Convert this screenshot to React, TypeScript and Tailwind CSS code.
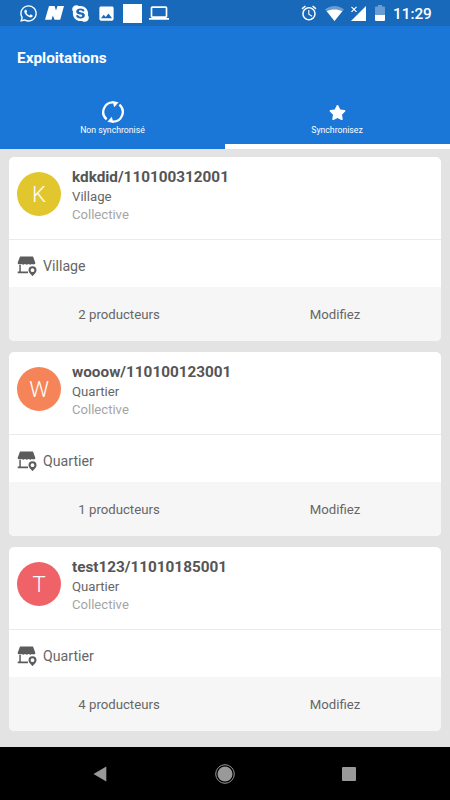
import { useState } from "react";
import { MdAccessAlarm, MdImage, MdLaptop } from "react-icons/md";
import { FaSkype, FaStar, FaWhatsapp } from "react-icons/fa";

const farms = [
  { letter: "K", color: "bg-[#e2c62e]", title: "kdkdid/110100312001", place: "Village", type: "Collective", count: 2 },
  { letter: "W", color: "bg-[#f58559]", title: "wooow/110100123001", place: "Quartier", type: "Collective", count: 1 },
  { letter: "T", color: "bg-[#ef6267]", title: "test123/11010185001", place: "Quartier", type: "Collective", count: 4 },
];

function StatusBar() {
  return (
    <div className="flex h-[26px] shrink-0 items-center justify-between bg-[#1869ba] pl-[19px] pr-[18px] text-white">
      <div className="flex items-center">
        <FaWhatsapp size={19} />
        <svg className="ml-[7px]" width="19" height="14" viewBox="0 0 19 14" fill="currentColor">
          <path d="M4 0h5.600l1.400 4.600L12.500 0H19l-3.800 13.800H9.600L7.800 9.400 6.500 13.800H0z" />
        </svg>
        <FaSkype className="ml-[7px]" size={19} />
        <MdImage className="ml-[7px]" size={19} />
        <div className="ml-[7px] size-[19px] bg-white" />
        <MdLaptop className="ml-[7px]" size={20} />
      </div>
      <div className="flex items-center">
        <MdAccessAlarm size={18} />
        <svg className="ml-[7px]" width="19" height="15" viewBox="0 0 19 15">
          <path d="M0 3.600C5.400-1.200 13.600-1.200 19 3.600L9.500 15z" fill="#fff" opacity="0.35" />
          <path d="M1.800 5.200c4.600-2.400 10.800-2.400 15.400 0L9.500 15z" fill="#fff" />
        </svg>
        <svg className="ml-[7px]" width="15" height="15" viewBox="0 0 15 15">
          <path d="M15 0v15H0z" fill="#fff" />
          <path d="M0 0h6.500v7.500H0z" fill="#1869ba" />
          <path d="M.5.800l5 5M5.500.800l-5 5" stroke="#fff" strokeWidth="1.200" />
        </svg>
        <svg className="ml-[9px]" width="10" height="16" viewBox="0 0 10 16">
          <path d="M3 0h4v1.500h2q1 0 1 1V10H0V2.500q0-1 1-1h2z" fill="#fff" opacity="0.35" />
          <path d="M0 10h10v5q0 1-1 1H1q-1 0-1-1z" fill="#fff" />
        </svg>
        <span className="ml-[8px] w-[39px] whitespace-nowrap pt-px text-[15.300px] font-medium leading-5">11:29</span>
      </div>
    </div>
  );
}

function SyncIcon() {
  return (
    <svg width="24" height="24" viewBox="0 0 24 24" fill="none" stroke="currentColor" strokeWidth="2.300">
      <path d="M5.600 19.300A9.700 9.700 0 0 1 12.500 2.300" />
      <path d="M18.400 4.700A9.700 9.700 0 0 1 11.500 21.700" />
      <path d="M11.500 1.100 17.600 2.200 13.200 7.200z" fill="currentColor" stroke="none" />
      <path d="M12.500 22.900 6.400 21.800 10.800 16.800z" fill="currentColor" stroke="none" />
    </svg>
  );
}

function StoreIcon() {
  return (
    <svg className="mb-px" width="20" height="20" viewBox="0 0 20 20" fill="#5c5c5c">
      <path d="M3 0.500h13l2.300 6.200q.2 1.500-1.300 1.500l-1 .4-1-.6-1.700.8-1.700-.8-1.800.8-1.800-.8-1.800.8-1.800-.8-1.300.6-1-.4Q.5 8.200.7 6.700z" />
      <path d="M2.300 9h1.500v6.400H11v1.900H.7v-1.900h1.600z" />
      <path d="M15.500 10.200a4 4 0 0 0-4 4c0 2.500 4 5.800 4 5.800s4-3.300 4-5.800a4 4 0 0 0-4-4zm0 2.100a1.900 1.900 0 1 1 0 3.800 1.900 1.900 0 0 1 0-3.800z" fillRule="evenodd" />
    </svg>
  );
}

function FarmCard({ farm }: { farm: (typeof farms)[number] }) {
  return (
    <div className="h-[184px] overflow-hidden rounded-[5px] bg-white">
      <div className="flex h-[83px] gap-[11px] border-b border-[#ebebeb] pl-2 pt-[10px]">
        <div className={`mt-[5px] flex size-11 shrink-0 items-center justify-center rounded-full text-[22px] font-light text-white ${farm.color}`}>
          {farm.letter}
        </div>
        <div>
          <h2 className="text-[15.300px] font-bold leading-[21px] text-[#555]">{farm.title}</h2>
          <p className="text-[13.200px] leading-[18px] text-[#666]">{farm.place}</p>
          <p className="text-[13.100px] leading-[18px] text-[#a5a5a5]">{farm.type}</p>
        </div>
      </div>
      <div className="flex h-[47px] items-center gap-[6px] pl-2 pt-[6px]">
        <StoreIcon />
        <span className="pt-px text-[14.200px] text-[#666]">{farm.place}</span>
      </div>
      <div className="grid h-[54px] grid-cols-2 items-center bg-[#f6f6f6] pt-px text-center text-[13.200px] text-[#666]">
        <button className="pl-1">{farm.count} producteurs</button>
        <button className="pl-1">Modifiez</button>
      </div>
    </div>
  );
}

export default function App() {
  const [tab, setTab] = useState(1);

  return (
    <div className="flex h-[800px] w-[450px] flex-col overflow-hidden bg-[#e3e3e3] font-['Roboto',sans-serif]">
      <StatusBar />
      <header className="flex h-[123px] shrink-0 flex-col bg-[#1a77d8] text-white">
        <h1 className="h-[63px] pl-[17px] pt-[20px] text-[15.350px] font-bold leading-6">Exploitations</h1>
        <nav className="grid flex-1 grid-cols-2 text-[8.700px] leading-3">
          <button
            className={`flex flex-col items-center border-b-[5px] pt-[11px] ${tab === 0 ? "border-white" : "border-transparent"}`}
            onClick={() => setTab(0)}
          >
            <SyncIcon />
            <span>Non synchronisé</span>
          </button>
          <button
            className={`flex flex-col items-center border-b-[5px] pr-px pt-[11px] ${tab === 1 ? "border-white" : "border-transparent"}`}
            onClick={() => setTab(1)}
          >
            <span className="flex h-6 items-center">
              <FaStar size={17} />
            </span>
            <span>Synchronisez</span>
          </button>
        </nav>
      </header>

      <main className="flex flex-1 flex-col gap-[11px] px-[9px] pt-2">
        {farms.map((farm) => (
          <FarmCard key={farm.title} farm={farm} />
        ))}
      </main>

      {/* Android navigation */}
      <div className="flex h-[53px] shrink-0 items-center justify-between bg-black pl-[93px] pr-[94px] text-[#999]">
        <svg width="14" height="16" viewBox="0 0 14 16" fill="currentColor">
          <path d="M13.300.500v15L.5 8z" />
        </svg>
        <svg width="20" height="20" viewBox="0 0 20 20" fill="currentColor">
          <circle cx="10" cy="10" r="7.500" />
          <circle cx="10" cy="10" r="9.300" fill="none" stroke="currentColor" />
        </svg>
        <div className="size-[14px] rounded-[1px] bg-[#999]" />
      </div>
    </div>
  );
}
